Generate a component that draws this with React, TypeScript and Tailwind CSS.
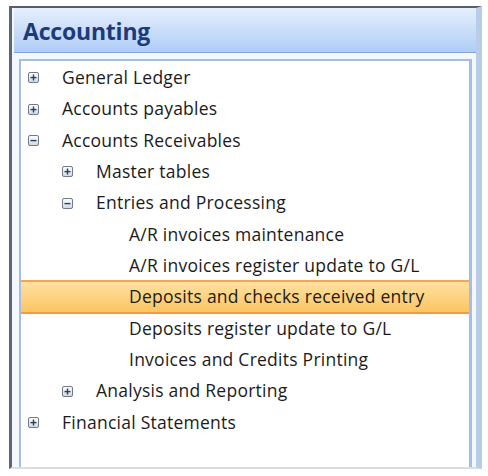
import React from "react";

type Row = { label: string; level: number; icon?: "plus" | "minus"; selected?: boolean };

const rows: Row[] = [
  { label: "General Ledger", level: 0, icon: "plus" },
  { label: "Accounts payables", level: 0, icon: "plus" },
  { label: "Accounts Receivables", level: 0, icon: "minus" },
  { label: "Master tables", level: 1, icon: "plus" },
  { label: "Entries and Processing", level: 1, icon: "minus" },
  { label: "A/R invoices maintenance", level: 2 },
  { label: "A/R invoices register update to G/L", level: 2 },
  { label: "Deposits and checks received entry", level: 2, selected: true },
  { label: "Deposits register update to G/L", level: 2 },
  { label: "Invoices and Credits Printing", level: 2 },
  { label: "Analysis and Reporting", level: 1, icon: "plus" },
  { label: "Financial Statements", level: 0, icon: "plus" },
];

function Expander({ kind }: { kind: "plus" | "minus" }) {
  return (
    <svg width="11" height="11" viewBox="0 0 11 11" className="block">
      <defs>
        <linearGradient id={`g-${kind}`} x1="0" y1="0" x2="0" y2="1">
          <stop offset="0" stopColor="#ffffff" />
          <stop offset="1" stopColor="#cfd7e4" />
        </linearGradient>
      </defs>
      <rect x="0.5" y="0.5" width="10" height="10" rx="1.5" fill={`url(#g-${kind})`} stroke="#6f7a8b" />
      <rect x="2.5" y="4.9" width="6" height="1.4" fill="#2f3f56" />
      {kind === "plus" && <rect x="4.8" y="2.5" width="1.4" height="6" fill="#2f3f56" />}
    </svg>
  );
}

const pads = ["pl-[7px]", "pl-[41px]", "pl-[74px]"];

export default function App() {
  return (
    <div className="w-[488px] h-[476px] bg-white" style={{ fontFamily: '"Open Sans", "Liberation Sans", sans-serif' }}>
      <div className="pt-[6px] pl-[9px] w-[482px]">
        <div className="h-[463px] flex flex-col border-t-2 border-t-[#595f68] border-l-[3px] border-l-[#5b6778] border-r-[6px] border-r-[#b9cdea] border-b-2 border-b-[#dadde2] bg-[#f4f7fc] pl-[2px]">
          <div className="h-[45px] shrink-0 flex items-center pl-[9px] bg-gradient-to-b from-[#e6effc] to-[#afcdf7] border-b border-b-[#86a6d4]">
            <span className="text-[23px] font-bold text-[#1d3b78] tracking-[-0.2px] leading-none pt-[2px]">Accounting</span>
          </div>
          <div className="flex-1 pt-[6px] pl-[5px] pr-[4px] flex flex-col">
            <div className="flex-1 bg-white border-t-2 border-l-2 border-r-[3px] border-[#a3bde5] pt-[1px]">
              {rows.map((r, i) => (
                <div
                  key={i}
                  className={
                    r.selected
                      ? "h-[34px] -my-[1.3px] relative z-10 flex items-center border-t-2 border-b-2 border-t-[#f7a35a] border-b-[#f39a45] bg-gradient-to-b from-[#fee1a0] to-[#fcc560] " + pads[r.level]
                      : "h-[31.35px] flex items-center " + pads[r.level]
                  }
                >
                  <div className="w-[11px] mr-[23px] flex items-center">
                    {r.icon && <Expander kind={r.icon} />}
                  </div>
                  <span className="text-[17.5px] tracking-[0.25px] text-[#1b1b1b] whitespace-nowrap leading-none">{r.label}</span>
                </div>
              ))}
            </div>
          </div>
        </div>
      </div>
    </div>
  );
}
